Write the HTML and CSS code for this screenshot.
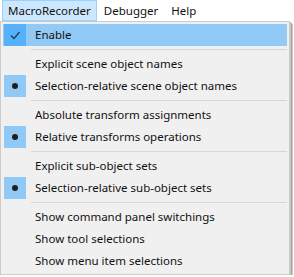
FILE: index.html
```html
<!DOCTYPE html>
<html lang="ko">
<head>
  <meta charset="UTF-8">
  <title>MacroRecorder Menu</title>
  <link rel="stylesheet" href="styles.css">
</head>
<body>
  <div class="menubar">
    <span class="top-item open">MacroRecorder</span>
    <span class="top-item">Debugger</span>
    <span class="top-item">Help</span>
  </div>
  <div class="popup">
    <div class="row hover">
      <span class="mark check">
        <svg width="22" height="22" viewBox="0 0 22 22"><path d="M7 11.5 L10 14.5 L15.5 8" fill="none" stroke="#1c3b5e" stroke-width="1.3"/></svg>
      </span>
      <span class="label">Enable</span>
    </div>
    <div class="sep"></div>
    <div class="row"><span class="mark"></span><span class="label">Explicit scene object names</span></div>
    <div class="row"><span class="mark on"><i class="dot"></i></span><span class="label">Selection-relative scene object names</span></div>
    <div class="sep"></div>
    <div class="row"><span class="mark"></span><span class="label">Absolute transform assignments</span></div>
    <div class="row"><span class="mark on"><i class="dot"></i></span><span class="label">Relative transforms operations</span></div>
    <div class="sep"></div>
    <div class="row"><span class="mark"></span><span class="label">Explicit sub-object sets</span></div>
    <div class="row"><span class="mark on"><i class="dot"></i></span><span class="label">Selection-relative sub-object sets</span></div>
    <div class="sep"></div>
    <div class="row"><span class="mark"></span><span class="label">Show command panel switchings</span></div>
    <div class="row"><span class="mark"></span><span class="label">Show tool selections</span></div>
    <div class="row"><span class="mark"></span><span class="label">Show menu item selections</span></div>
  </div>
</body>
</html>
```

FILE: styles.css
```css
/* Base */
body {
  margin: 0;
  background: #fff;
  font-family: "Noto Sans", "Noto Sans CJK KR", sans-serif;
  font-size: 11.5px;
  color: #111;
}

/* Menu bar */
.menubar {
  display: flex;
  height: 21px;
  align-items: stretch;
}

.top-item {
  display: flex;
  align-items: center;
  padding: 0 5px 1px;
  border: 1px solid transparent;
  margin-left: 1px;
}

.top-item.open {
  background: #cce8ff;
  border-color: #99d1ff;
  margin-left: 2px;
  margin-right: 0;
}

/* Popup menu */
.popup {
  width: 290px;
  box-sizing: border-box;
  background: #f0f0f0;
  border: 1px solid #cccccc;
  padding: 2px;
  box-shadow: 1px 1px 0 #c4c4c4, 2px 2px 0 #a8a8a8, 3px 3px 0 #c8c8c8;
}

.row {
  display: flex;
  align-items: center;
  height: 22px;
}

.row.hover {
  background: #91c9f7;
}

.mark {
  width: 22px;
  height: 22px;
  margin-left: 1px;
  display: flex;
  align-items: center;
  justify-content: center;
  flex-shrink: 0;
}

.mark.check {
  background: #56b0fa;
}

.mark.on {
  background: #90c8f6;
}

.dot {
  width: 6px;
  height: 6px;
  border-radius: 50%;
  background: #1e1e1e;
}

.label {
  padding-left: 9px;
  padding-bottom: 1px;
}

.sep {
  height: 1px;
  background: #d7d7d7;
  margin: 3px 0 3px 28px;
}
```
